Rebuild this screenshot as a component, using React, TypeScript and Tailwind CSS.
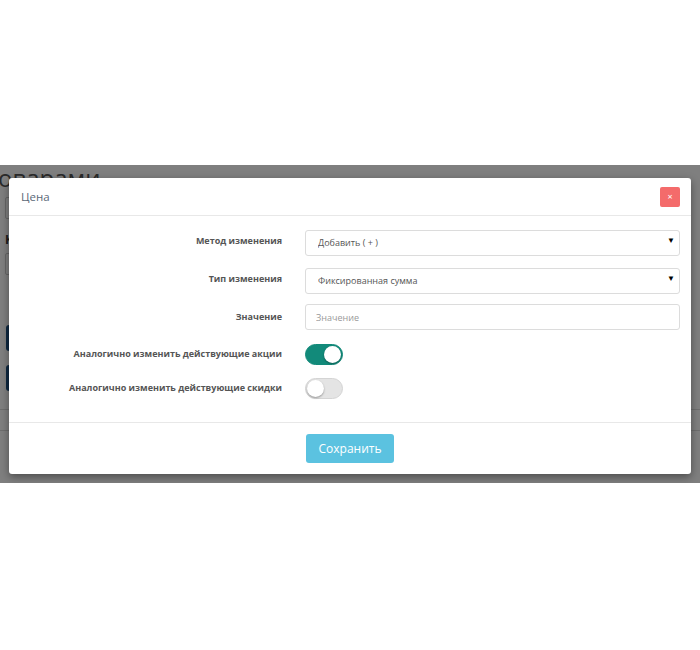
import { useState } from 'react';

const font = { fontFamily: '"Open Sans", "Liberation Sans", sans-serif' };

const Toggle = ({ on, onChange }: { on: boolean; onChange: (v: boolean) => void }) => (
  <button
    type="button"
    onClick={() => onChange(!on)}
    className={`relative h-[21px] w-[38px] rounded-full border ${
      on ? 'border-[#128a7a] bg-[#128a7a]' : 'border-[#d4d4d4] bg-[#e4e4e4]'
    }`}
  >
    <span
      className={`absolute top-[1px] h-[17px] w-[17px] rounded-full bg-white shadow-[0_1px_2px_rgba(0,0,0,0.35)] ${
        on ? 'left-[18px]' : 'left-[1px]'
      }`}
    />
  </button>
);

const Select = ({ value, options }: { value: string; options: string[] }) => (
  <div className="relative h-[26px] w-full">
    <select
      defaultValue={value}
      className="h-full w-full appearance-none rounded-[3px] border border-[#dcdcdc] bg-white pl-[12px] text-[9px] text-[#555] outline-none"
    >
      {options.map((o) => (
        <option key={o}>{o}</option>
      ))}
    </select>
    <span className="pointer-events-none absolute right-[5px] top-[6px] text-[8px] text-black">▼</span>
  </div>
);

const Label = ({ children }: { children: string }) => (
  <div className="flex items-center justify-end text-[9px] font-bold text-[#555]">{children}</div>
);

export default function App() {
  const [promo, setPromo] = useState(true);
  const [discount, setDiscount] = useState(false);

  return (
    <div className="min-h-[650px] w-[700px] bg-white" style={font}>
      <div className="h-[165px]" />
      <div className="relative h-[318px] overflow-hidden bg-white">
        {/* page behind the modal */}
        <div className="flex items-end gap-[10px]">
          <span className="-ml-[2px] text-[24px] leading-[26px] text-[#555]">оварами</span>
          <span className="pb-[1px] text-[9px] text-[#888]">
            Главная &nbsp;/ Модули &nbsp;/ <span className="text-[#1e5f9b]">Массовое управление товарами</span>
          </span>
        </div>
        <div className="ml-[5px] mt-[6px] h-[22px] w-[40px] rounded-[2px] border border-[#ccc]" />
        <div className="ml-[5px] mt-[12px] text-[12px] font-bold text-[#333]">К</div>
        <div className="ml-[5px] mt-[4px] h-[22px] w-[40px] rounded-[2px] border border-[#ccc]" />
        <div className="ml-[6px] mt-[50px] h-[26px] w-[20px] rounded-[3px] bg-[#1b4f80]" />
        <div className="ml-[6px] mt-[14px] h-[26px] w-[20px] rounded-[3px] bg-[#1b4f80]" />
        <div className="mt-[18px] h-px w-full bg-[#ddd]" />
        <div className="mt-[20px] flex h-[40px] border-t border-[#ddd]">
          <div className="w-[45px] border-r border-[#ddd]" />
          <div className="w-[80px] border-r border-[#ddd]" />
          <div className="w-[150px] border-r border-[#ddd]" />
          <div className="w-[185px] border-r border-[#ddd]" />
          <div className="w-[180px] border-r border-[#ddd]" />
        </div>
        <div className="absolute inset-0 bg-black/50" />

        {/* modal */}
        <div className="absolute left-[9px] top-[13px] w-[682px] rounded-[3px] bg-white shadow-[0_3px_8px_rgba(0,0,0,0.4)]">
          <div className="flex h-[38px] items-center justify-between border-b border-[#e8e8e8] pl-[12px] pr-[11px]">
            <span className="text-[11.5px] text-[#5a6878]">Цена</span>
            <button className="flex h-[20px] w-[20px] items-center justify-center rounded-[2px] bg-[#f46b6b] text-[9px] leading-none text-white">
              ×
            </button>
          </div>
          <div className="grid grid-cols-[261px_1fr] gap-x-[23px] gap-y-[12px] pb-[24px] pl-[12px] pr-[11px] pt-[12px]">
            <Label>Метод изменения</Label>
            <Select value="Добавить ( + )" options={['Добавить ( + )', 'Вычесть ( - )']} />
            <Label>Тип изменения</Label>
            <Select value="Фиксированная сумма" options={['Фиксированная сумма', 'Процент']} />
            <Label>Значение</Label>
            <input
              placeholder="Значение"
              className="h-[26px] w-full rounded-[3px] border border-[#dcdcdc] px-[10px] text-[9px] text-[#555] outline-none placeholder:text-[#999]"
            />
            <Label>Аналогично изменить действующие акции</Label>
            <div className="flex h-[24px] items-center">
              <Toggle on={promo} onChange={setPromo} />
            </div>
            <Label>Аналогично изменить действующие скидки</Label>
            <div className="flex h-[20px] items-center">
              <Toggle on={discount} onChange={setDiscount} />
            </div>
          </div>
          <div className="grid grid-cols-[261px_1fr] gap-x-[24px] border-t border-[#e8e8e8] pb-[11px] pl-[12px] pt-[11px]">
            <div />
            <div>
              <button className="h-[29px] w-[88px] rounded-[3px] bg-[#5bc2e0] text-[12px] text-white">Сохранить</button>
            </div>
          </div>
        </div>
      </div>
    </div>
  );
}
